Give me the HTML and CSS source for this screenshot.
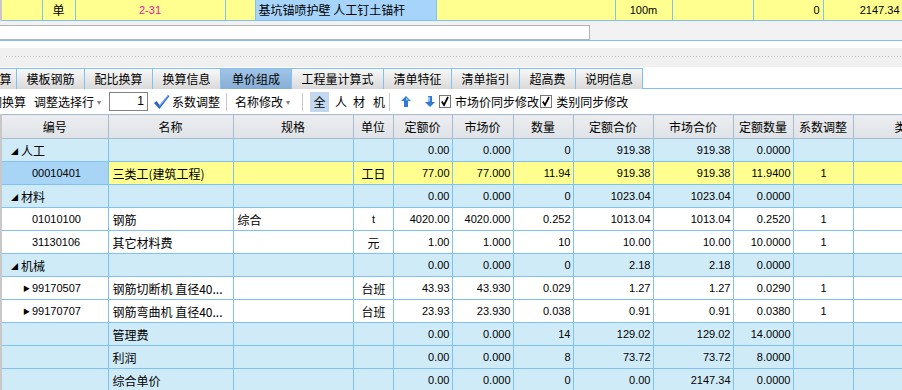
FILE: index.html
```html
<!DOCTYPE html>
<html lang="zh-CN">
<head>
    <meta charset="UTF-8">
    <title>单价组成</title>
    <link rel="stylesheet" href="styles.css">
</head>
<body>
    <div class="top-grid">
        <table class="top-row">
            <colgroup>
                <col style="width:41px"><col style="width:33px"><col style="width:150px"><col style="width:30px">
                <col style="width:181px"><col style="width:179px"><col style="width:57px"><col style="width:81px">
                <col style="width:70px"><col style="width:80px">
            </colgroup>
            <tr>
                <td></td>
                <td class="c">单</td>
                <td class="c num code-pink">2-31</td>
                <td></td>
                <td class="name-blue">基坑锚喷护壁 人工钉土锚杆</td>
                <td></td>
                <td class="c num">100m</td>
                <td></td>
                <td class="r num">0</td>
                <td class="r num">2147.34</td>
            </tr>
        </table>
    </div>

    <div class="edit-strip">
        <div class="edit-box"></div>
    </div>
    <div class="gap"></div>
    <div class="splitter"><div class="dots"></div></div>

    <div class="tabs">
        <div class="tab cut">算</div>
        <div class="tab">模板钢筋</div>
        <div class="tab">配比换算</div>
        <div class="tab">换算信息</div>
        <div class="tab active">单价组成</div>
        <div class="tab wide">工程量计算式</div>
        <div class="tab">清单特征</div>
        <div class="tab">清单指引</div>
        <div class="tab short">超高费</div>
        <div class="tab">说明信息</div>
    </div>

    <div class="toolbar">
        <span class="tb cut-left">调换算</span>
        <span class="tb drop">调整选择行<span class="caret">▾</span></span>
        <span class="num-box">1</span>
        <svg class="tick" width="17" height="16" viewBox="0 0 17 16"><path d="M1 9 L3.5 7 L6.5 11 L15 1 L16.5 2 L6.5 15 Z" fill="#2a63c9"/><path d="M6.5 11 L15 1 L15.8 1.5 L6.5 12.8 Z" fill="#86b2ef"/></svg>
        <span class="tb">系数调整</span>
        <span class="sep"></span>
        <span class="tb drop">名称修改<span class="caret">▾</span></span>
        <span class="sep tight"></span>
        <span class="pick on">全</span>
        <span class="pick">人</span>
        <span class="pick">材</span>
        <span class="pick last">机</span>
        <span class="sep"></span>
        <svg class="arrow up" width="10" height="11" viewBox="0 0 10 11"><path d="M5 0 L10 5 L7 5 L7 11 L3 11 L3 5 L0 5 Z" fill="#2f79d9"/><path d="M5 1.5 L8 4.2 L5 4.2 Z" fill="#9cc8f6"/></svg>
        <svg class="arrow down" width="10" height="11" viewBox="0 0 10 11"><path d="M5 11 L10 6 L7 6 L7 0 L3 0 L3 6 L0 6 Z" fill="#2f79d9"/><path d="M3 1 L5 1 L5 5.5 L3 5.5 Z" fill="#9cc8f6"/></svg>
        <span class="check">
            <span class="box"><svg width="10" height="11" viewBox="0 0 10 11"><path d="M1.8 5.5 L4 9 L8 1" stroke="#000" stroke-width="1.7" fill="none"/></svg></span>市场价同步修改
        </span>
        <span class="check">
            <span class="box"><svg width="10" height="11" viewBox="0 0 10 11"><path d="M1.8 5.5 L4 9 L8 1" stroke="#000" stroke-width="1.7" fill="none"/></svg></span>类别同步修改
        </span>
    </div>

    <div class="grid-wrap">
        <table class="grid">
            <colgroup>
                <col style="width:107px"><col style="width:125px"><col style="width:120px"><col style="width:40px">
                <col style="width:59px"><col style="width:61px"><col style="width:60px"><col style="width:80px">
                <col style="width:80px"><col style="width:60px"><col style="width:60px"><col style="width:100px">
            </colgroup>
            <thead>
                <tr>
                    <th>编号</th><th>名称</th><th>规格</th><th>单位</th><th>定额价</th><th>市场价</th>
                    <th>数量</th><th>定额合价</th><th>市场合价</th><th>定额数量</th><th>系数调整</th><th class="cut-th">类别</th>
                </tr>
            </thead>
            <tbody>
                <tr class="group">
                    <td class="grp"><span class="tri">◢</span>人工</td><td></td><td></td><td></td>
                    <td class="r">0.00</td><td class="r">0.000</td><td class="r">0</td><td class="r">919.38</td>
                    <td class="r">919.38</td><td class="r">0.0000</td><td></td><td></td>
                </tr>
                <tr class="sel">
                    <td class="code cur">00010401</td><td>三类工(建筑工程)</td><td></td><td class="c">工日</td>
                    <td class="r">77.00</td><td class="r">77.000</td><td class="r">11.94</td><td class="r">919.38</td>
                    <td class="r">919.38</td><td class="r">11.9400</td><td class="c n">1</td><td></td>
                </tr>
                <tr class="group">
                    <td class="grp"><span class="tri">◢</span>材料</td><td></td><td></td><td></td>
                    <td class="r">0.00</td><td class="r">0.000</td><td class="r">0</td><td class="r">1023.04</td>
                    <td class="r">1023.04</td><td class="r">0.0000</td><td></td><td></td>
                </tr>
                <tr>
                    <td class="code">01010100</td><td>钢筋</td><td>综合</td><td class="c n">t</td>
                    <td class="r">4020.00</td><td class="r">4020.000</td><td class="r">0.252</td><td class="r">1013.04</td>
                    <td class="r">1013.04</td><td class="r">0.2520</td><td class="c n">1</td><td></td>
                </tr>
                <tr>
                    <td class="code">31130106</td><td>其它材料费</td><td></td><td class="c">元</td>
                    <td class="r">1.00</td><td class="r">1.000</td><td class="r">10</td><td class="r">10.00</td>
                    <td class="r">10.00</td><td class="r">10.0000</td><td class="c n">1</td><td></td>
                </tr>
                <tr class="group">
                    <td class="grp"><span class="tri">◢</span>机械</td><td></td><td></td><td></td>
                    <td class="r">0.00</td><td class="r">0.000</td><td class="r">0</td><td class="r">2.18</td>
                    <td class="r">2.18</td><td class="r">0.0000</td><td></td><td></td>
                </tr>
                <tr>
                    <td class="code"><span class="exp">▶</span>99170507</td><td>钢筋切断机 直径40...</td><td></td><td class="c">台班</td>
                    <td class="r">43.93</td><td class="r">43.930</td><td class="r">0.029</td><td class="r">1.27</td>
                    <td class="r">1.27</td><td class="r">0.0290</td><td class="c n">1</td><td></td>
                </tr>
                <tr>
                    <td class="code"><span class="exp">▶</span>99170707</td><td>钢筋弯曲机 直径40...</td><td></td><td class="c">台班</td>
                    <td class="r">23.93</td><td class="r">23.930</td><td class="r">0.038</td><td class="r">0.91</td>
                    <td class="r">0.91</td><td class="r">0.0380</td><td class="c n">1</td><td></td>
                </tr>
                <tr class="group">
                    <td></td><td>管理费</td><td></td><td></td>
                    <td class="r">0.00</td><td class="r">0.000</td><td class="r">14</td><td class="r">129.02</td>
                    <td class="r">129.02</td><td class="r">14.0000</td><td></td><td></td>
                </tr>
                <tr class="group">
                    <td></td><td>利润</td><td></td><td></td>
                    <td class="r">0.00</td><td class="r">0.000</td><td class="r">8</td><td class="r">73.72</td>
                    <td class="r">73.72</td><td class="r">8.0000</td><td></td><td></td>
                </tr>
                <tr class="group">
                    <td></td><td>综合单价</td><td></td><td></td>
                    <td class="r">0.00</td><td class="r">0.000</td><td class="r">0</td><td class="r">0.00</td>
                    <td class="r">2147.34</td><td class="r">0.0000</td><td></td><td></td>
                </tr>
            </tbody>
        </table>
    </div>
</body>
</html>
```

FILE: styles.css
```css
* {
    margin: 0;
    padding: 0;
    box-sizing: border-box;
}
body {
    width: 902px;
    height: 390px;
    overflow: hidden;
    background: #fff;
    font-family: "Noto Sans CJK SC", sans-serif;
    font-size: 12px;
    color: #000;
}
table {
    border-collapse: collapse;
    table-layout: fixed;
}
.c { text-align: center; }
.r { text-align: right; }

/* top row of the upper grid */
.top-grid {
    height: 21px;
    overflow: hidden;
}
.top-row {
    width: 902px;
}
.top-row td {
    height: 20px;
    background: #ffff90;
    border-right: 1px solid #7fc1f2;
    border-bottom: 1px solid #7fc1f2;
    padding: 0 3px;
    white-space: nowrap;
    overflow: hidden;
}
.top-row td:first-child {
    border-left: 2px solid #c8c8c8;
}
.top-row td.num {
    font-family: "Liberation Sans", sans-serif;
    font-size: 11px;
}
.top-row .code-pink {
    color: #f0139a;
    font-size: 12px;
}
.top-row .name-blue {
    background: #a6d4fb;
}

.edit-strip {
    height: 20px;
    background: #f2f2f2;
    padding-top: 4px;
    border-bottom: 1px solid #7fc1f2;
}
.edit-box {
    width: 590px;
    height: 15px;
    background: #fff;
    border: 1px solid #b4b4b4;
    border-left: none;
}
.gap {
    height: 7px;
    background: #fff;
}
.splitter {
    height: 19px;
    background: #f0f0f0;
    padding: 7px 0 0 5px;
}
.dots {
    height: 3px;
    background-image: radial-gradient(#c2c2c2 0.7px, transparent 0.8px);
    background-size: 3px 3px;
}

/* tabs */
.tabs {
    display: flex;
    height: 22px;
    padding-top: 1px;
    border-bottom: 1px solid #7fc1f2;
    background: #fff;
}
.tab {
    width: 68px;
    height: 21px;
    border: 1px solid #7fc1f2;
    border-right: none;
    border-bottom: none;
    background: linear-gradient(#f8f8f8, #dadada);
    line-height: 19px;
    text-align: center;
}
.tab:last-child {
    border-right: 1px solid #7fc1f2;
}
.tab.cut {
    width: 16px;
    text-indent: -5px;
    border-left: none;
    overflow: hidden;
}
.tab.active {
    width: 71px;
    background: linear-gradient(#a1c3e6, #86aed6);
}
.tab.wide { width: 92px; }
.tab.short { width: 56px; }

/* toolbar */
.toolbar {
    display: flex;
    align-items: center;
    height: 25px;
    white-space: nowrap;
}
.tb {
    display: flex;
    align-items: center;
    height: 20px;
}
.cut-left {
    margin-left: -10px;
    margin-right: 8px;
}
.caret {
    font-size: 8px;
    color: #808080;
    margin: 0 0 0 3px;
}
.drop {
    margin-right: 8px;
}
.num-box {
    width: 39px;
    height: 19px;
    border: 1px solid #828282;
    text-align: right;
    padding-right: 3px;
    line-height: 17px;
    font-family: "Liberation Sans", sans-serif;
    margin-right: 5px;
}
.tick {
    margin-right: 2px;
}
.sep {
    width: 1px;
    height: 18px;
    background: #c8c8c8;
    margin: 0 8px 0 6px;
}
.sep.tight {
    margin: 0 7px 0 4px;
}
.pick {
    display: flex;
    align-items: center;
    justify-content: center;
    height: 20px;
    margin-right: 6px;
}
.pick.on {
    width: 19px;
    background: #c3d8ee;
}
.pick.last {
    margin-left: 2px;
    margin-right: -2px;
}
.arrow.up {
    margin: 0 14px 0 3px;
}
.arrow.down {
    margin-right: 4px;
}
.check {
    display: flex;
    align-items: center;
}
.box {
    width: 12px;
    height: 13px;
    border: 1px solid #777;
    background: #fff;
    display: flex;
    align-items: center;
    justify-content: center;
    margin-right: 4px;
}
.check + .check .box {
    margin-left: 1px;
}

/* unit-price grid */
.grid-wrap {
    width: 902px;
    overflow: hidden;
}
.grid {
    width: 952px;
}
.grid th,
.grid td {
    border: 1px solid #7fc1f2;
    height: 23px;
    padding: 0 3px;
    white-space: nowrap;
    overflow: hidden;
    font-weight: normal;
}
.grid th {
    background: linear-gradient(#eceef1, #dfe2e6);
    border-color: #a8bccf;
    text-align: center;
    height: 24px;
}
.grid th.cut-th {
    text-align: left;
    padding-left: 41px;
}
.grid tr > :first-child {
    border-left: 2px solid #c8c8c8;
}
.grid td {
    background: #fff;
    padding-left: 4px;
}
.grid tr.group td {
    background: #d0ebf8;
}
.grid tr.sel td {
    background: #ffff90;
}
.grid tr.sel td.cur {
    background: #a8d4f6;
}
.grid td.grp {
    padding-left: 9px;
}
.tri {
    font-size: 7px;
    margin-right: 3px;
    vertical-align: 2px;
}
.grid td.r,
.grid td.code,
.grid td.n {
    font-family: "Liberation Sans", sans-serif;
    font-size: 11px;
}
.grid td.r {
    padding-right: 2px;
}
.grid td.code {
    padding-left: 30px;
}
.exp {
    display: inline-block;
    width: 9px;
    margin-left: -9px;
    font-size: 7px;
    vertical-align: 1px;
}
```
